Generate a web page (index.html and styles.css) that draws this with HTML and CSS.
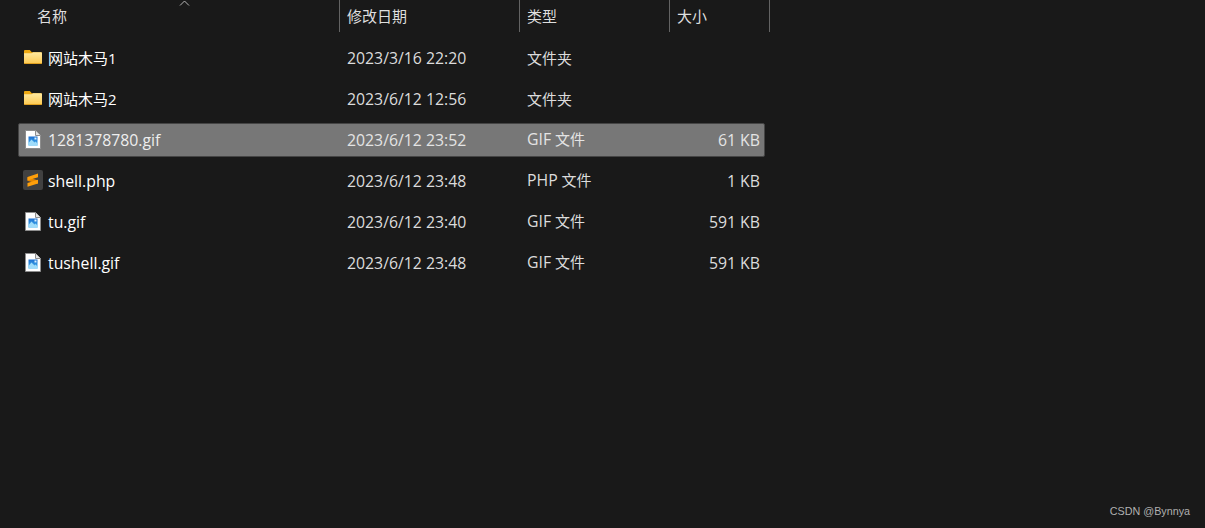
FILE: index.html
```html
<!DOCTYPE html>
<html lang="zh">
<head>
<meta charset="utf-8">
<title>文件列表</title>
<link rel="stylesheet" href="styles.css">
</head>
<body>
<svg class="defs" width="0" height="0" aria-hidden="true">
  <defs>
    <linearGradient id="fg" x1="0" y1="0" x2="0" y2="1"><stop offset="0" stop-color="#ffe9a0"/><stop offset="1" stop-color="#fdc94f"/></linearGradient>
    <linearGradient id="pg" x1="0" y1="0" x2="0" y2="1"><stop offset="0" stop-color="#1e6fd0"/><stop offset="1" stop-color="#45b4f0"/></linearGradient>
    <symbol id="folder" viewBox="0 0 18 14">
      <path d="M0 1.200C0 .5.5 0 1.200 0h4.600l2 2.200H16.800c.7 0 1.200.5 1.200 1.200V5H0z" fill="#eea912"/>
      <path d="M0 3.300h7.500l1.700-1h7.600c.7 0 1.200.5 1.200 1.200v9.300c0 .7-.5 1.200-1.200 1.200H1.200C.5 14 0 13.500 0 12.800z" fill="url(#fg)"/>
      <path d="M0 13h18v.3c0 .4-.4.700-1 .700H1c-.6 0-1-.3-1-.7z" fill="#e0a020"/>
    </symbol>
    <symbol id="gif" viewBox="0 0 16 19">
      <path d="M.5.500h10l5 5v13H.5z" fill="#fff" stroke="#8d8d8d"/>
      <path d="M10.500.500v5h5" fill="#e4e4e4" stroke="#8d8d8d"/>
      <rect x="3.500" y="6.500" width="9" height="9" fill="url(#pg)"/>
      <path d="M3.500 15.500v-2.500l3-3.500 3 3 1-1 2.500 2.500v1.500z" fill="#9fdcfa"/>
      <rect x="9.500" y="7.500" width="2" height="2" fill="#d9f2ff"/>
    </symbol>
    <symbol id="sublime" viewBox="0 0 20 20">
      <rect width="20" height="20" rx="2" fill="#414141"/>
      <path d="M4.500 10.800l10 3v-3.600l-10-3z" fill="#e58600"/>
      <path d="M15 3.500v3.800L4.500 10.500V7z" fill="#ff9f0a"/>
      <path d="M15 9.800v3.700L4.500 16.800v-3.700z" fill="#ff9f0a"/>
    </symbol>
  </defs>
</svg>
<main class="explorer">
  <header class="head">
    <div class="col col-name"><span class="cjk-head">名称</span></div>
    <div class="col"><span class="cjk-head">修改日期</span></div>
    <div class="col"><span class="cjk-head">类型</span></div>
    <div class="col"><span class="cjk-head">大小</span></div>
    <svg class="sort" width="11" height="6" viewBox="0 0 11 6"><path d="M1 5.500l4.500-4.500 4.500 4.500" fill="none" stroke="#b4b4b4"/></svg>
  </header>
  <ul class="rows">
    <li class="row"><span class="name cjk"><svg class="ico ico-folder"><use href="#folder"/></svg>网站木马1</span><span class="lat">2023/3/16 22:20</span><span class="cjk">文件夹</span><span class="size"></span></li>
    <li class="row"><span class="name cjk"><svg class="ico ico-folder"><use href="#folder"/></svg>网站木马2</span><span class="lat">2023/6/12 12:56</span><span class="cjk">文件夹</span><span class="size"></span></li>
    <li class="row selected"><span class="name lat"><svg class="ico ico-gif"><use href="#gif"/></svg>1281378780.gif</span><span class="lat">2023/6/12 23:52</span><span class="cjk"><span class="lat">GIF</span> 文件</span><span class="size lat">61 KB</span></li>
    <li class="row"><span class="name lat"><svg class="ico ico-sub"><use href="#sublime"/></svg>shell.php</span><span class="lat">2023/6/12 23:48</span><span class="cjk"><span class="lat">PHP</span> 文件</span><span class="size lat">1 KB</span></li>
    <li class="row"><span class="name lat"><svg class="ico ico-gif"><use href="#gif"/></svg>tu.gif</span><span class="lat">2023/6/12 23:40</span><span class="cjk"><span class="lat">GIF</span> 文件</span><span class="size lat">591 KB</span></li>
    <li class="row"><span class="name lat"><svg class="ico ico-gif"><use href="#gif"/></svg>tushell.gif</span><span class="lat">2023/6/12 23:48</span><span class="cjk"><span class="lat">GIF</span> 文件</span><span class="size lat">591 KB</span></li>
  </ul>
</main>
<div class="mark">CSDN @Bynnya</div>
</body>
</html>
```

FILE: styles.css
```css
* { box-sizing: border-box; }
html, body { margin: 0; height: 100%; }
body {
  background: #191919;
  color: #fff;
  font-family: "Open Sans", "Noto Sans CJK SC", sans-serif;
  font-size: 15px;
  overflow: hidden;
  position: relative;
}
.defs { position: absolute; }
.explorer { width: 770px; }
.head {
  position: relative;
  display: grid;
  grid-template-columns: 340px 180px 150px 100px;
  height: 32px;
  color: #dedede;
}
.col {
  display: flex;
  align-items: center;
  padding: 0 0 0 7px;
  border-right: 1px solid #636363;
}
.col-name { padding-left: 37px; }
.cjk-head { padding-bottom: 2px; }
.sort { position: absolute; left: 179px; top: 0; }
.rows {
  list-style: none;
  margin: 9px 0 0;
  padding: 0;
  display: flex;
  flex-direction: column;
  gap: 7px;
}
.row {
  display: grid;
  grid-template-columns: 321px 180px 150px 1fr;
  align-items: center;
  width: 747px;
  height: 34px;
  margin-left: 18px;
  border: 1px solid transparent;
  border-radius: 2px;
  color: #dcdcdc;
}
.lat { font-size: 15.800px; }
.cjk { padding-bottom: 2px; }
.row > span:not(.name) { padding-left: 7px; }
.row > .size { padding: 0 4px 0 0; text-align: right; }
.name {
  display: flex;
  align-items: center;
  color: #fff;
  padding-left: 29px;
  position: relative;
}
.selected {
  background: #777;
  border-color: #454545;
  color: #e4e4e4;
}
.selected .name { color: #eee; }
.ico { position: absolute; }
.ico-folder { left: 5px; top: 3px; width: 18px; height: 14px; }
.ico-gif { left: 6px; top: 1px; width: 16px; height: 19px; }
.ico-sub { left: 4px; top: 0; width: 20px; height: 20px; }
.mark {
  position: absolute;
  right: 15px;
  bottom: 11px;
  font-family: "Liberation Sans", sans-serif;
  font-size: 10.750px;
  color: #b0b0b0;
}
```
